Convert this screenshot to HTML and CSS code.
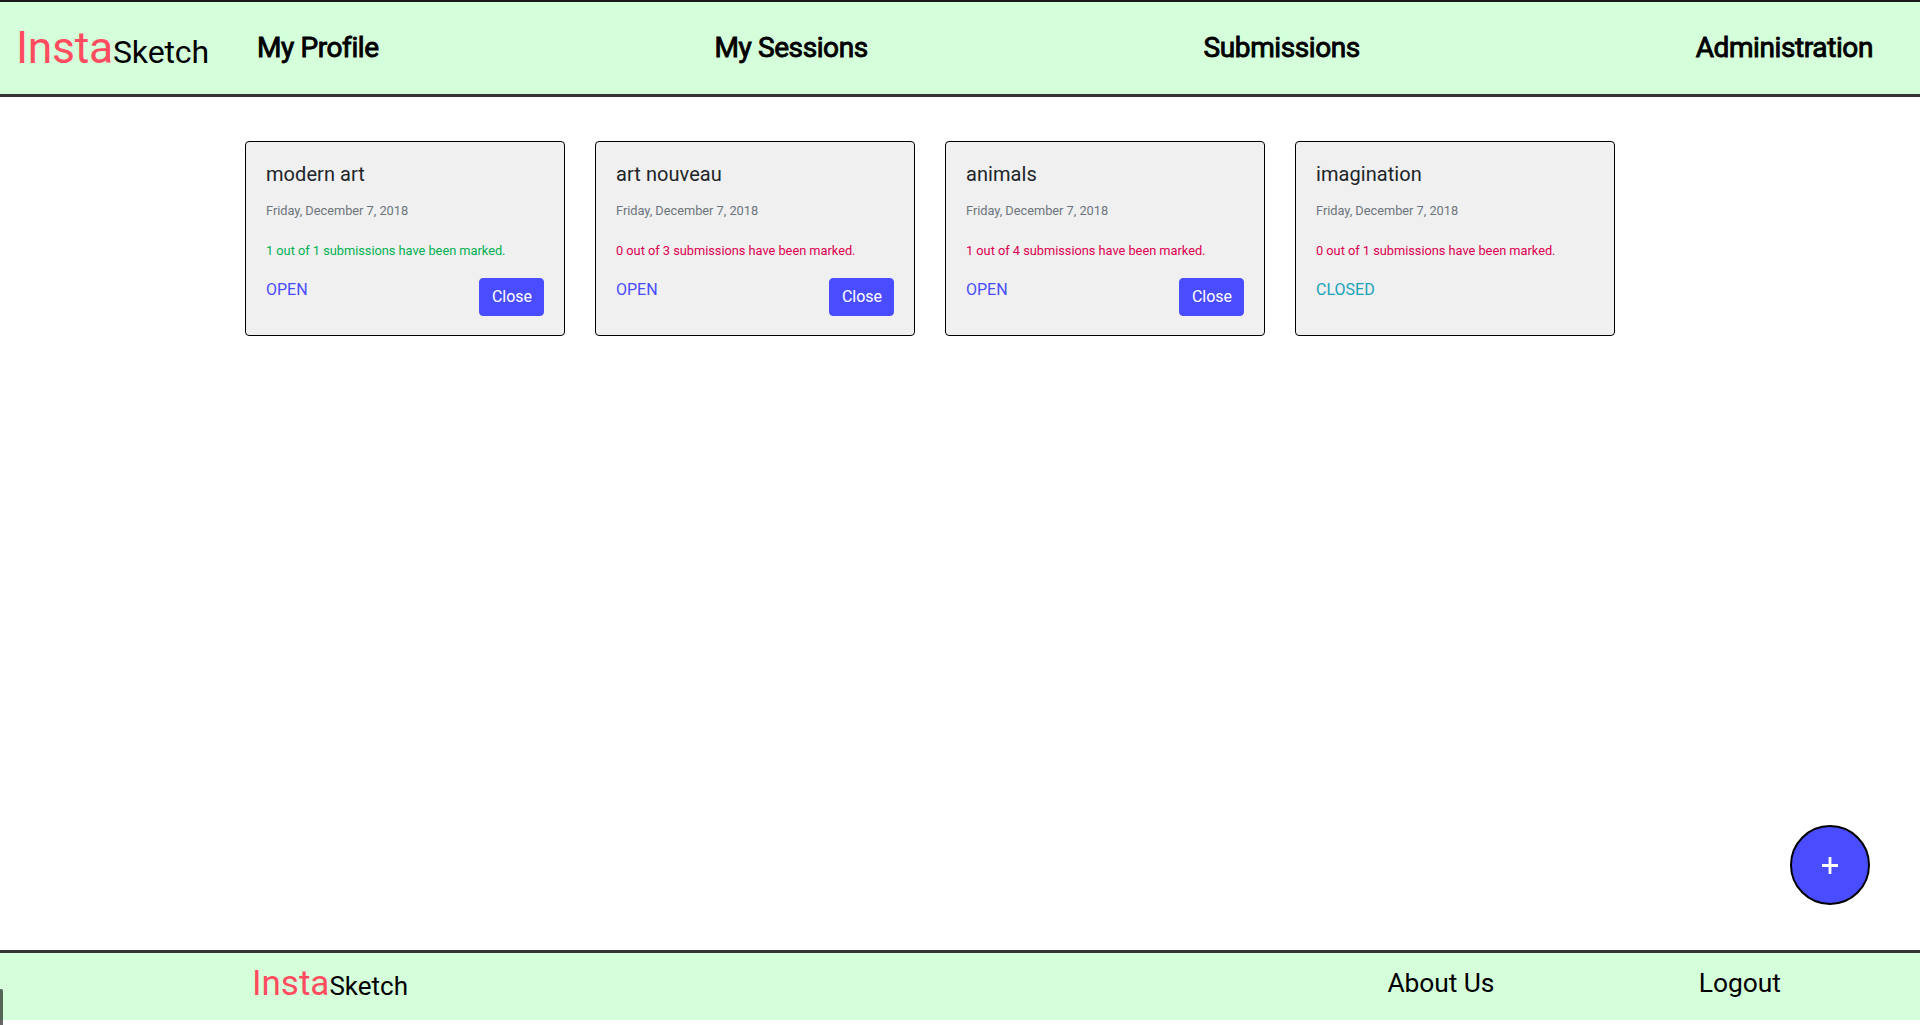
FILE: index.html
```html
<!DOCTYPE html>
<html lang="en">
<head>
<meta charset="utf-8">
<title>InstaSketch</title>
<link rel="stylesheet" href="styles.css">
</head>
<body>
<header class="topbar">
  <a class="brand"><span class="brand-accent">Insta</span>Sketch</a>
  <nav class="nav">
    <a>My Profile</a>
    <a>My Sessions</a>
    <a>Submissions</a>
    <a>Administration</a>
  </nav>
</header>
<main class="sessions">
  <article class="card">
    <h5>modern art</h5>
    <p class="date"><small>Friday, December 7, 2018</small></p>
    <p class="done"><small>1 out of 1 submissions have been marked.</small></p>
    <div class="row"><span class="open">OPEN</span><button class="btn">Close</button></div>
  </article>
  <article class="card">
    <h5>art nouveau</h5>
    <p class="date"><small>Friday, December 7, 2018</small></p>
    <p class="pending"><small>0 out of 3 submissions have been marked.</small></p>
    <div class="row"><span class="open">OPEN</span><button class="btn">Close</button></div>
  </article>
  <article class="card">
    <h5>animals</h5>
    <p class="date"><small>Friday, December 7, 2018</small></p>
    <p class="pending"><small>1 out of 4 submissions have been marked.</small></p>
    <div class="row"><span class="open">OPEN</span><button class="btn">Close</button></div>
  </article>
  <article class="card">
    <h5>imagination</h5>
    <p class="date"><small>Friday, December 7, 2018</small></p>
    <p class="pending"><small>0 out of 1 submissions have been marked.</small></p>
    <div class="row"><span class="closed">CLOSED</span></div>
  </article>
</main>
<button class="add" aria-label="Add session"><svg width="16" height="17" viewBox="0 0 16 17"><path d="M8 0v17M0 8.5h16" stroke="#fff" stroke-width="2.8"/></svg></button>
<footer class="footer">
  <a class="brand brand-small"><span class="brand-accent">Insta</span>Sketch</a>
  <a class="about">About Us</a>
  <a class="logout">Logout</a>
</footer>
<div class="edge-tab"></div>
</body>
</html>
```
FILE: styles.css
```css
* { box-sizing: border-box; }
body {
  margin: 0;
  height: 1025px;
  display: flex;
  flex-direction: column;
  overflow: hidden;
  padding-bottom: 5px;
  background: #fff;
  color: #212529;
  font: 16px/24px Roboto, sans-serif;
}
.topbar {
  height: 97px;
  flex: none;
  display: flex;
  align-items: center;
  background: #d5ffdb;
  border-top: 2px solid #1a1a1a;
  border-bottom: 3px solid #333;
  padding: 0 47px 0 16px;
  color: #000;
}
.brand { font-size: 32px; line-height: 54px; padding-top: 3px; width: 241px; white-space: nowrap; color: #000; }
.brand-accent { font-size: 44.5px; letter-spacing: -0.3px; color: #ff4c5f; }
.topbar .brand { letter-spacing: -0.1px; }
.nav {
  flex: 1;
  display: flex;
  justify-content: space-between;
  font-size: 28px;
  letter-spacing: -0.4px;
  line-height: 34px;
  -webkit-text-stroke: 0.9px #000;
}
.sessions {
  flex: 1;
  display: flex;
  align-items: flex-start;
  gap: 30px;
  padding: 44px 245px 0;
}
.card {
  width: 320px;
  height: 195px;
  padding: 20px;
  background: #f0f0f0;
  border: 1px solid #000;
  border-radius: 4px;
}
.card h5 { margin: 0 0 12px; font-size: 20px; letter-spacing: 0.06px; line-height: 24px; font-weight: 400; }
.card p { margin: 0 0 15px; }
.card small { font-size: 12.8px; letter-spacing: -0.02px; }
.date { color: #6c757d; }
.done { color: #00b050; }
.pending { color: #dc0050; }
.row { display: flex; justify-content: space-between; align-items: flex-start; }
.open { color: #4a4dff; }
.closed { color: #17a2b8; }
.btn {
  width: 65px;
  height: 38px;
  padding: 6px 0 6px 1px;
  border: 1px solid #4a4dff;
  border-radius: 4px;
  background: #4a4dff;
  color: #fff;
  font: inherit;
}
.add {
  position: absolute;
  left: 1790px;
  top: 825px;
  width: 80px;
  height: 80px;
  display: flex;
  align-items: center;
  justify-content: center;
  padding: 0;
  border: 2px solid #000;
  border-radius: 50%;
  background: #4a4dff;
}
.footer {
  height: 70px;
  flex: none;
  display: flex;
  align-items: flex-start;
  background: #d5ffdb;
  border-top: 3px solid #333;
  padding: 9px 139px 0 252px;
  color: #000;
  font-size: 26.4px;
  line-height: 42px;
}
.brand-small { width: auto; padding-top: 1px; font-size: 26px; line-height: 42px; }
.brand-small .brand-accent { font-size: 35px; letter-spacing: 0; }
.about { margin-left: auto; margin-right: 204.5px; letter-spacing: -0.1px; }
.edge-tab {
  position: absolute;
  left: 0;
  top: 989px;
  width: 3px;
  height: 36px;
  background: rgba(0, 0, 0, .6);
  border-top-right-radius: 2px;
}
```
